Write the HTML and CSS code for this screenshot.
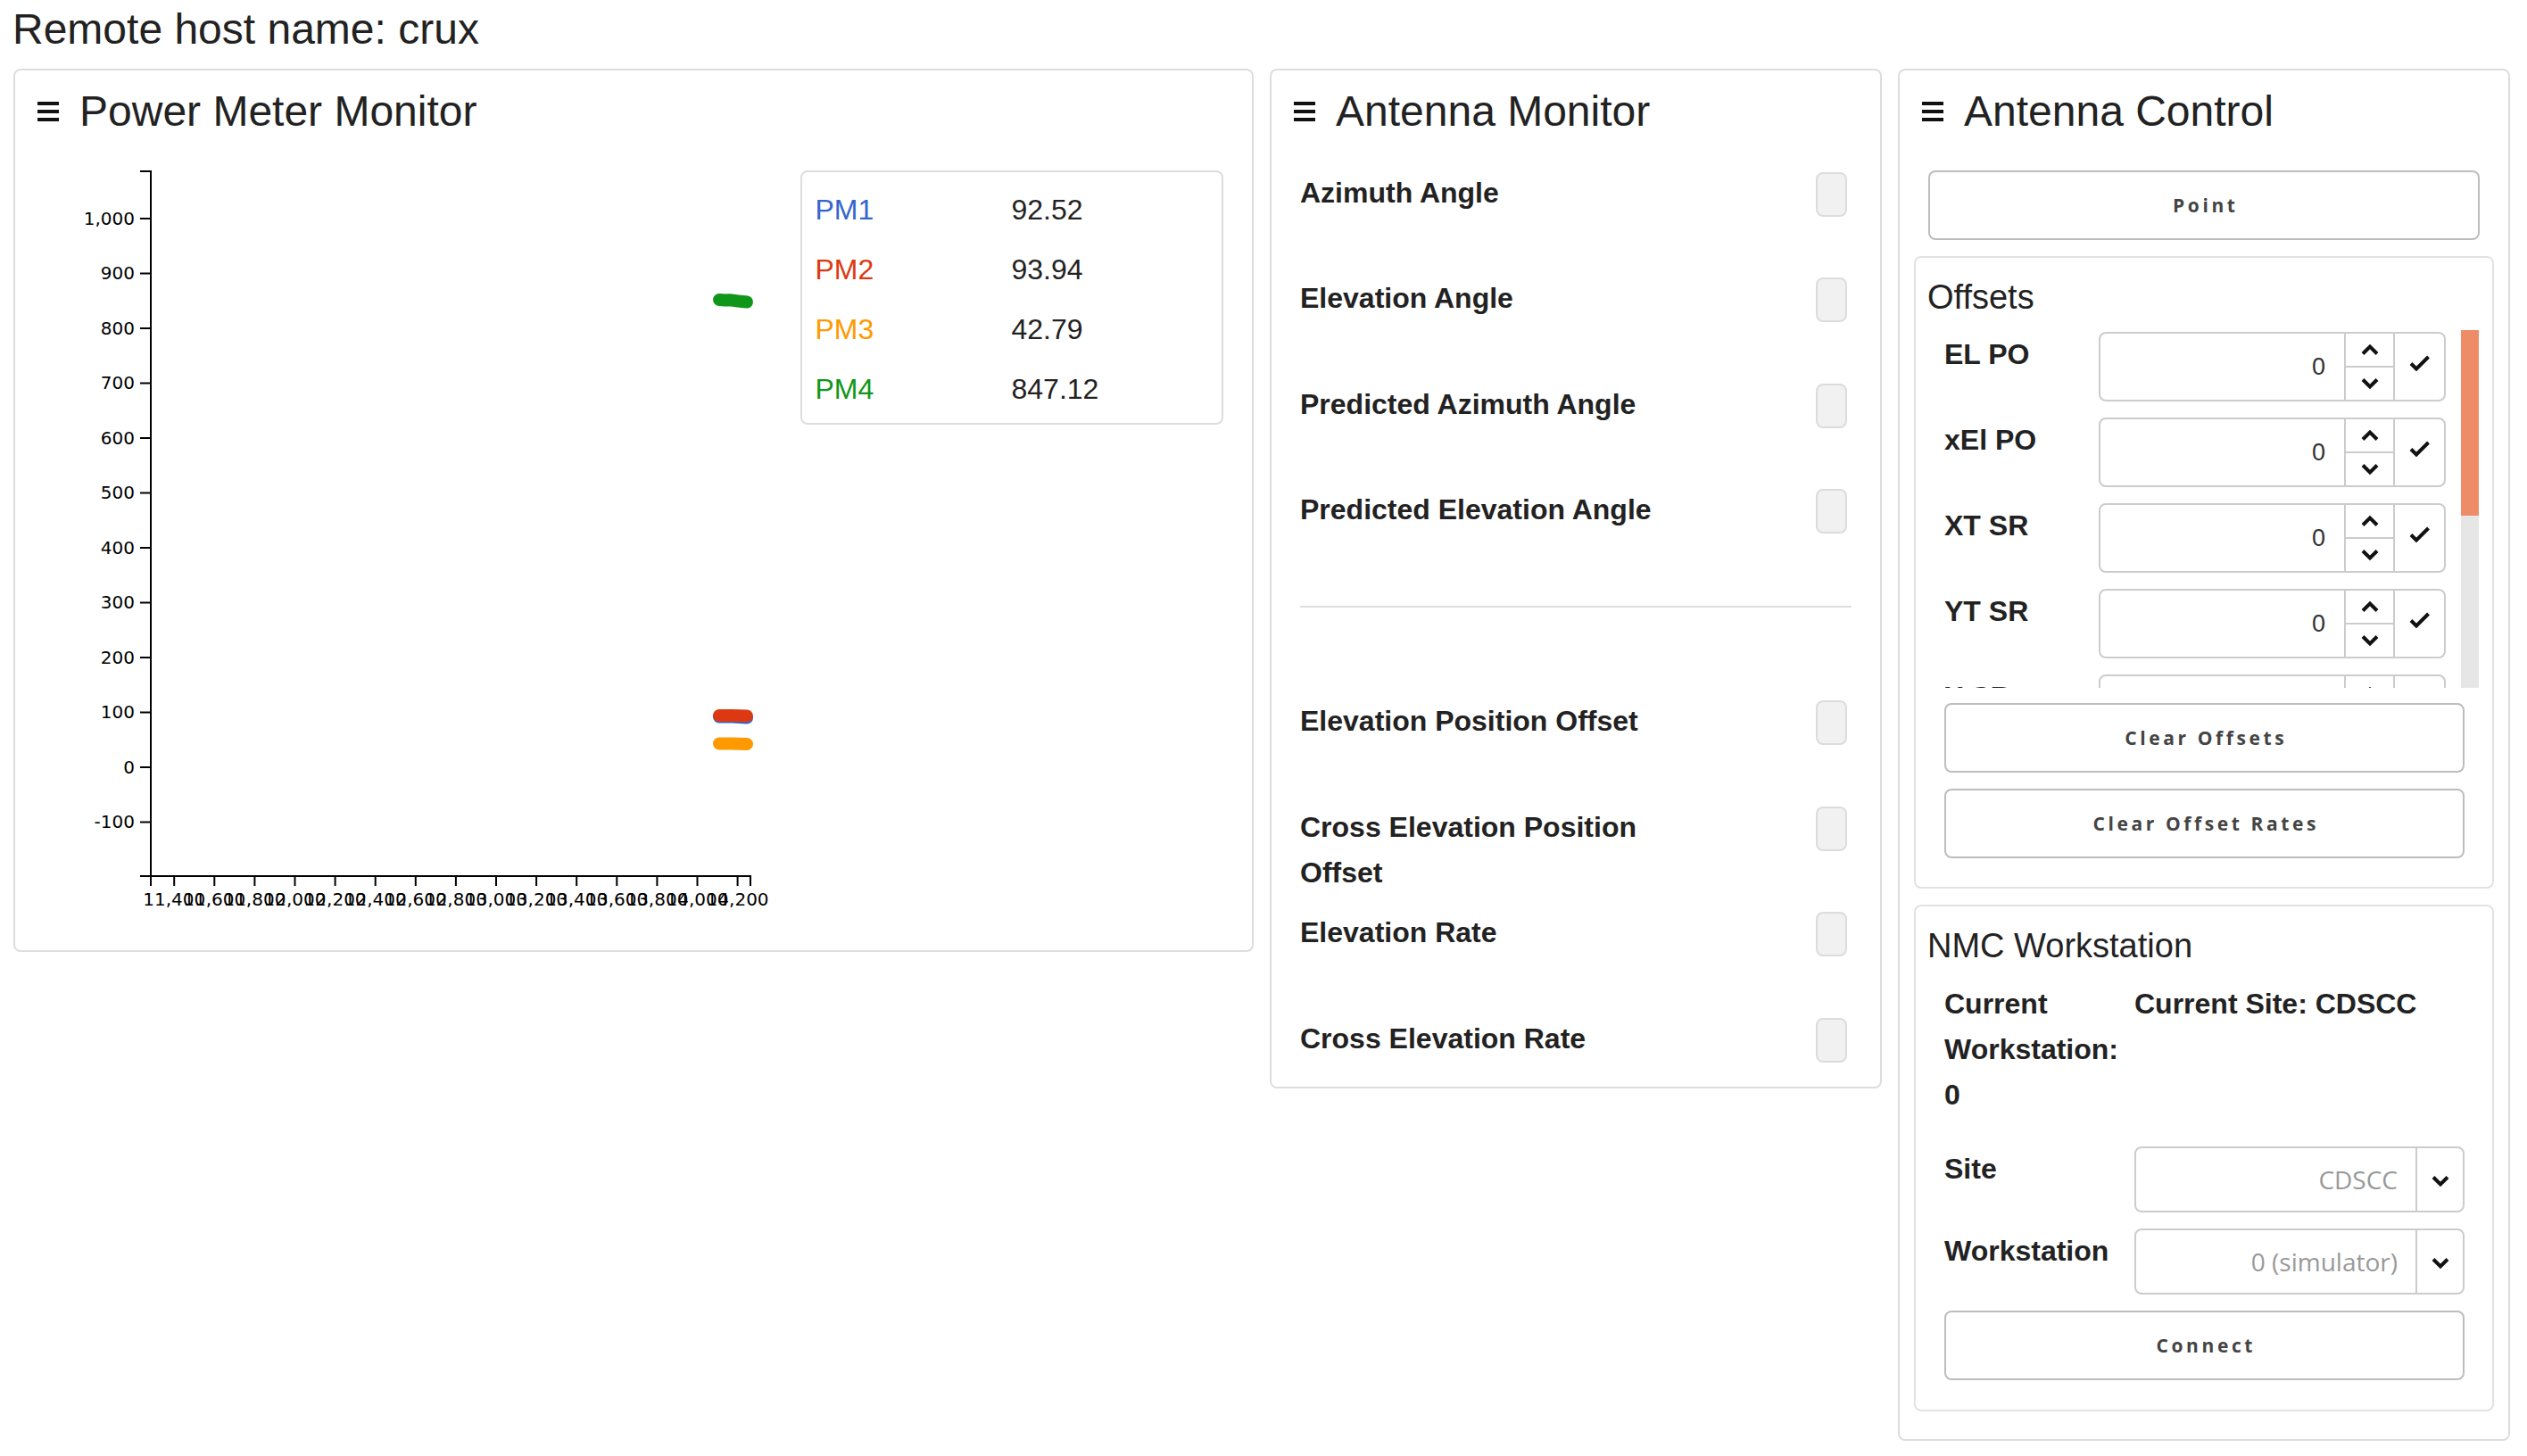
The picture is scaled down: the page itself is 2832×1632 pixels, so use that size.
FILE: index.html
```html
<!DOCTYPE html>
<html>
<head>
<meta charset="utf-8">
<title>Remote host</title>
<link rel="stylesheet" href="styles.css">
</head>
<body>
<div class="host">Remote host name: crux</div>
<div class="panels">
  <section class="panel pm">
    <h2 class="ptitle"><svg class="menu" width="24" height="22" viewBox="0 0 24 22"><rect x="0" y="0" width="24" height="4"/><rect x="0" y="9" width="24" height="4"/><rect x="0" y="18" width="24" height="4"/></svg><span>Power Meter Monitor</span></h2>
    <div class="pm-body">
      <svg class="chart" width="848" height="840" viewBox="0 0 848 840">
        <g stroke="#000" stroke-width="2" fill="none">
          <path d="M108,1H120V791H108"/>
          <path d="M120,802V791H792V802"/>
          <path d="M108,730.5H120M108,669H120M108,607.5H120M108,546H120M108,484.5H120M108,423H120M108,361.5H120M108,300H120M108,238.5H120M108,177H120M108,115.5H120M108,54H120"/>
          <path d="M146.2,791V802M191.3,791V802M236.4,791V802M281.5,791V802M326.6,791V802M371.7,791V802M416.8,791V802M461.9,791V802M507,791V802M552.1,791V802M597.2,791V802M642.3,791V802M687.4,791V802M732.5,791V802M777.6,791V802"/>
        </g>
        <g class="ticks" text-anchor="end">
          <text x="102" y="737">-100</text>
          <text x="102" y="675.5">0</text>
          <text x="102" y="614">100</text>
          <text x="102" y="552.5">200</text>
          <text x="102" y="491">300</text>
          <text x="102" y="429.5">400</text>
          <text x="102" y="368">500</text>
          <text x="102" y="306.5">600</text>
          <text x="102" y="245">700</text>
          <text x="102" y="183.5">800</text>
          <text x="102" y="122">900</text>
          <text x="102" y="60.5">1,000</text>
        </g>
        <g class="ticks" text-anchor="middle">
          <text x="146.2" y="824">11,400</text>
          <text x="191.3" y="824">11,600</text>
          <text x="236.4" y="824">11,800</text>
          <text x="281.5" y="824">12,000</text>
          <text x="326.6" y="824">12,200</text>
          <text x="371.7" y="824">12,400</text>
          <text x="416.8" y="824">12,600</text>
          <text x="461.9" y="824">12,800</text>
          <text x="507" y="824">13,000</text>
          <text x="552.1" y="824">13,200</text>
          <text x="597.2" y="824">13,400</text>
          <text x="642.3" y="824">13,600</text>
          <text x="687.4" y="824">13,800</text>
          <text x="732.5" y="824">14,000</text>
          <text x="777.6" y="824">14,200</text>
        </g>
        <g fill="none" stroke-width="14" stroke-linecap="round" stroke-linejoin="round">
          <path stroke="#3366cc" d="M757,612.5L772,612.5L788,613.5"/>
          <path stroke="#dc3912" d="M757,611L772,611L788,611.5"/>
          <path stroke="#ff9900" d="M757,642.5L772,642.5L788,643"/>
          <path stroke="#109618" d="M757,145L764,145.5L770,145.3L778,146.5L788,147.5"/>
        </g>
      </svg>
      <div class="legend">
        <div class="lrow"><span class="pm1">PM1</span><span>92.52</span></div>
        <div class="lrow"><span class="pm2">PM2</span><span>93.94</span></div>
        <div class="lrow"><span class="pm3">PM3</span><span>42.79</span></div>
        <div class="lrow"><span class="pm4">PM4</span><span>847.12</span></div>
      </div>
    </div>
  </section>

  <section class="panel am">
    <h2 class="ptitle"><svg class="menu" width="24" height="22" viewBox="0 0 24 22"><rect x="0" y="0" width="24" height="4"/><rect x="0" y="9" width="24" height="4"/><rect x="0" y="18" width="24" height="4"/></svg><span>Antenna Monitor</span></h2>
    <div class="am-list">
      <div class="am-row"><div class="am-label">Azimuth Angle</div><div class="am-box"></div></div>
      <div class="am-row"><div class="am-label">Elevation Angle</div><div class="am-box"></div></div>
      <div class="am-row"><div class="am-label">Predicted Azimuth Angle</div><div class="am-box"></div></div>
      <div class="am-row"><div class="am-label">Predicted Elevation Angle</div><div class="am-box"></div></div>
      <div class="am-sep"><div class="am-line"></div></div>
      <div class="am-row"><div class="am-label">Elevation Position Offset</div><div class="am-box"></div></div>
      <div class="am-row"><div class="am-label">Cross Elevation Position Offset</div><div class="am-box"></div></div>
      <div class="am-row"><div class="am-label">Elevation Rate</div><div class="am-box"></div></div>
      <div class="am-row"><div class="am-label">Cross Elevation Rate</div><div class="am-box"></div></div>
    </div>
  </section>

  <section class="panel ac">
    <h2 class="ptitle"><svg class="menu" width="24" height="22" viewBox="0 0 24 22"><rect x="0" y="0" width="24" height="4"/><rect x="0" y="9" width="24" height="4"/><rect x="0" y="18" width="24" height="4"/></svg><span>Antenna Control</span></h2>
    <button class="btn">Point</button>

    <div class="sub offsets">
      <div class="stitle">Offsets</div>
      <div class="scrollwrap">
        <div class="viewport">
          <div class="orow"><div class="olabel">EL PO</div><div class="ogroup"><div class="oval">0</div><div class="ospin"><span><svg width="22" height="14" viewBox="0 0 22 14"><path d="M3,11.5L11,3.5L19,11.5"/></svg></span><span><svg width="22" height="14" viewBox="0 0 22 14"><path d="M3,2.5L11,10.5L19,2.5"/></svg></span></div><div class="ocheck"><svg width="24" height="18" viewBox="0 0 24 18"><path d="M2,9.5L8,15.5L21.5,2"/></svg></div></div></div>
          <div class="orow"><div class="olabel">xEl PO</div><div class="ogroup"><div class="oval">0</div><div class="ospin"><span><svg width="22" height="14" viewBox="0 0 22 14"><path d="M3,11.5L11,3.5L19,11.5"/></svg></span><span><svg width="22" height="14" viewBox="0 0 22 14"><path d="M3,2.5L11,10.5L19,2.5"/></svg></span></div><div class="ocheck"><svg width="24" height="18" viewBox="0 0 24 18"><path d="M2,9.5L8,15.5L21.5,2"/></svg></div></div></div>
          <div class="orow"><div class="olabel">XT SR</div><div class="ogroup"><div class="oval">0</div><div class="ospin"><span><svg width="22" height="14" viewBox="0 0 22 14"><path d="M3,11.5L11,3.5L19,11.5"/></svg></span><span><svg width="22" height="14" viewBox="0 0 22 14"><path d="M3,2.5L11,10.5L19,2.5"/></svg></span></div><div class="ocheck"><svg width="24" height="18" viewBox="0 0 24 18"><path d="M2,9.5L8,15.5L21.5,2"/></svg></div></div></div>
          <div class="orow"><div class="olabel">YT SR</div><div class="ogroup"><div class="oval">0</div><div class="ospin"><span><svg width="22" height="14" viewBox="0 0 22 14"><path d="M3,11.5L11,3.5L19,11.5"/></svg></span><span><svg width="22" height="14" viewBox="0 0 22 14"><path d="M3,2.5L11,10.5L19,2.5"/></svg></span></div><div class="ocheck"><svg width="24" height="18" viewBox="0 0 24 18"><path d="M2,9.5L8,15.5L21.5,2"/></svg></div></div></div>
          <div class="orow"><div class="olabel">X SR</div><div class="ogroup"><div class="oval">0</div><div class="ospin"><span><svg width="22" height="14" viewBox="0 0 22 14"><path d="M3,11.5L11,3.5L19,11.5"/></svg></span><span><svg width="22" height="14" viewBox="0 0 22 14"><path d="M3,2.5L11,10.5L19,2.5"/></svg></span></div><div class="ocheck"><svg width="24" height="18" viewBox="0 0 24 18"><path d="M2,9.5L8,15.5L21.5,2"/></svg></div></div></div>
        </div>
        <div class="sbar"><div class="sthumb"></div></div>
      </div>
      <button class="btn sbtn first">Clear Offsets</button>
      <button class="btn sbtn">Clear Offset Rates</button>
    </div>

    <div class="sub nmc">
      <div class="stitle">NMC Workstation</div>
      <div class="ninfo"><div>Current Workstation: 0</div><div>Current Site: CDSCC</div></div>
      <div class="nrow first"><div class="nlabel">Site</div><div class="nsel"><span class="nval">CDSCC</span><span class="narrow"><svg width="22" height="14" viewBox="0 0 22 14"><path d="M3,2.5L11,10.5L19,2.5"/></svg></span></div></div>
      <div class="nrow"><div class="nlabel">Workstation</div><div class="nsel"><span class="nval">0 (simulator)</span><span class="narrow"><svg width="22" height="14" viewBox="0 0 22 14"><path d="M3,2.5L11,10.5L19,2.5"/></svg></span></div></div>
      <button class="btn sbtn first">Connect</button>
    </div>
  </section>
</div>
</body>
</html>
```

FILE: styles.css
```css
* { box-sizing: border-box; }
html, body { margin: 0; padding: 0; background: #fff; }
body {
  font-family: "Liberation Sans", Arial, sans-serif;
  color: #222;
  padding: 0 0 0 15px;
  width: 2832px;
}
.host {
  font-size: 48px;
  line-height: 58px;
  padding-top: 4px;
  margin: 0 0 15px -1px;
}
.panels {
  display: flex;
  gap: 18px;
  align-items: flex-start;
}
.panel {
  border: 2px solid #dddddd;
  border-radius: 8px;
  padding: 0 32px;
  background: #fff;
}
.ptitle {
  display: flex;
  align-items: center;
  margin: 0 0 36.6px -7px;
  padding-top: 17.4px;
  font-size: 48px;
  line-height: 58px;
  font-weight: normal;
  color: #222;
}
.menu { display: block; margin-right: 23px; fill: #111; flex: none; }

/* Power meter */
.pm { width: 1390px; padding-bottom: 34px; }
.pm-body {
  display: flex;
  justify-content: space-between;
  align-items: flex-start;
}
.chart { display: block; }
.ticks { font-family: "DejaVu Sans", sans-serif; font-size: 20px; fill: #000; }
.legend {
  width: 474px;
  height: 285px;
  border: 2px solid #dddddd;
  border-radius: 8px;
  padding-top: 9.5px;
}
.lrow {
  display: grid;
  grid-template-columns: 220px 1fr;
  height: 66.7px;
  line-height: 66.7px;
  font-size: 32px;
  padding-left: 14.5px;
  color: #222;
}
.pm1 { color: #3366cc; }
.pm2 { color: #dc3912; }
.pm3 { color: #ff9900; }
.pm4 { color: #109618; }

/* Antenna monitor */
.am { width: 686px; padding-bottom: 28px; }
.am-row {
  display: flex;
  justify-content: space-between;
  align-items: flex-start;
  height: 118.5px;
}
.am-row:last-child { height: 51px; }
.am-label {
  font-weight: bold;
  font-size: 32px;
  line-height: 51px;
  max-width: 420px;
}
.am-box {
  flex: none;
  width: 35px;
  height: 50px;
  margin: 2px 5px 0 0;
  background: #f1f1f1;
  border: 2px solid #dcdcdc;
  border-radius: 8px;
}
.am-sep { height: 118.5px; padding-top: 14px; }
.am-line { height: 2px; background: #dddddd; }

/* Antenna control */
.ac { width: 686px; padding-bottom: 31px; }
.btn {
  display: block;
  width: 100%;
  height: 78px;
  margin: 0;
  padding: 0 0 0 3.6px;
  border: 2px solid #bdbdbd;
  border-radius: 8px;
  background: #fff;
  font-family: "Open Sans", "DejaVu Sans", sans-serif;
  font-weight: 700;
  font-size: 21px;
  letter-spacing: 3.6px;
  color: #444;
}
.sub {
  margin: 18px -16px 0;
  border: 2px solid #e2e2e2;
  border-radius: 8px;
  padding: 20.8px 15px 32px 16px;
}
.nmc { padding-bottom: 33px; }
.stitle {
  font-size: 38px;
  line-height: 46px;
  margin-left: -3px;
  color: #222;
}
.offsets .stitle { margin-bottom: 14px; }
.scrollwrap {
  display: flex;
  margin-left: 16px;
  height: 401px;
}
.viewport {
  flex: 1;
  overflow: hidden;
  padding-top: 2px;
}
.sbar {
  flex: none;
  width: 20px;
  background: #e6e6e6;
}
.sthumb {
  height: 208px;
  background: #ee8c68;
}
.orow {
  display: flex;
  align-items: flex-start;
  height: 96px;
}
.olabel {
  flex: none;
  width: 173px;
  font-weight: bold;
  font-size: 32px;
  line-height: 51px;
}
.ogroup {
  flex: none;
  display: flex;
  width: 389px;
  height: 78px;
  border: 2px solid #cccccc;
  border-radius: 8px;
}
.oval {
  flex: 1;
  text-align: right;
  padding-right: 21px;
  font-size: 27px;
  line-height: 74px;
  color: #333;
}
.ospin {
  flex: none;
  width: 55px;
  border-left: 2px solid #cccccc;
  display: flex;
  flex-direction: column;
}
.ospin span {
  flex: 1;
  display: flex;
  align-items: center;
  justify-content: center;
}
.ospin span + span { border-top: 2px solid #cccccc; }
.ocheck {
  flex: none;
  width: 57px;
  border-left: 2px solid #cccccc;
  display: flex;
  align-items: center;
  justify-content: center;
  padding-bottom: 8px;
}
.ospin svg path, .ocheck svg path, .narrow svg path {
  fill: none;
  stroke: #111;
  stroke-width: 4;
  stroke-linecap: butt;
  stroke-linejoin: miter;
}
.ospin svg, .ocheck svg, .narrow svg { display: block; }
.sbtn { width: calc(100% - 32px); margin: 18px 16px 0; }
.sbtn.first { margin-top: 17px; }
.nmc .sbtn.first { margin-top: 18px; }

.ninfo {
  display: grid;
  grid-template-columns: 213px 1fr;
  margin: 17.6px 0 0 16px;
  font-weight: bold;
  font-size: 32px;
  line-height: 51px;
}
.nrow {
  display: grid;
  grid-template-columns: 213px 1fr;
  align-items: start;
  margin: 18px 16px 0;
}
.nrow.first { margin-top: 31.6px; }
.nlabel {
  font-weight: bold;
  font-size: 32px;
  line-height: 51px;
}
.nsel {
  display: flex;
  height: 74px;
  border: 2px solid #cccccc;
  border-radius: 8px;
}
.nval {
  flex: 1;
  text-align: right;
  padding-right: 20px;
  font-family: "Open Sans", sans-serif;
  font-size: 28px;
  line-height: 70px;
  color: #999;
}
.narrow {
  flex: none;
  width: 53px;
  border-left: 2px solid #cccccc;
  display: flex;
  align-items: center;
  justify-content: center;
  padding-top: 4px;
}
```
